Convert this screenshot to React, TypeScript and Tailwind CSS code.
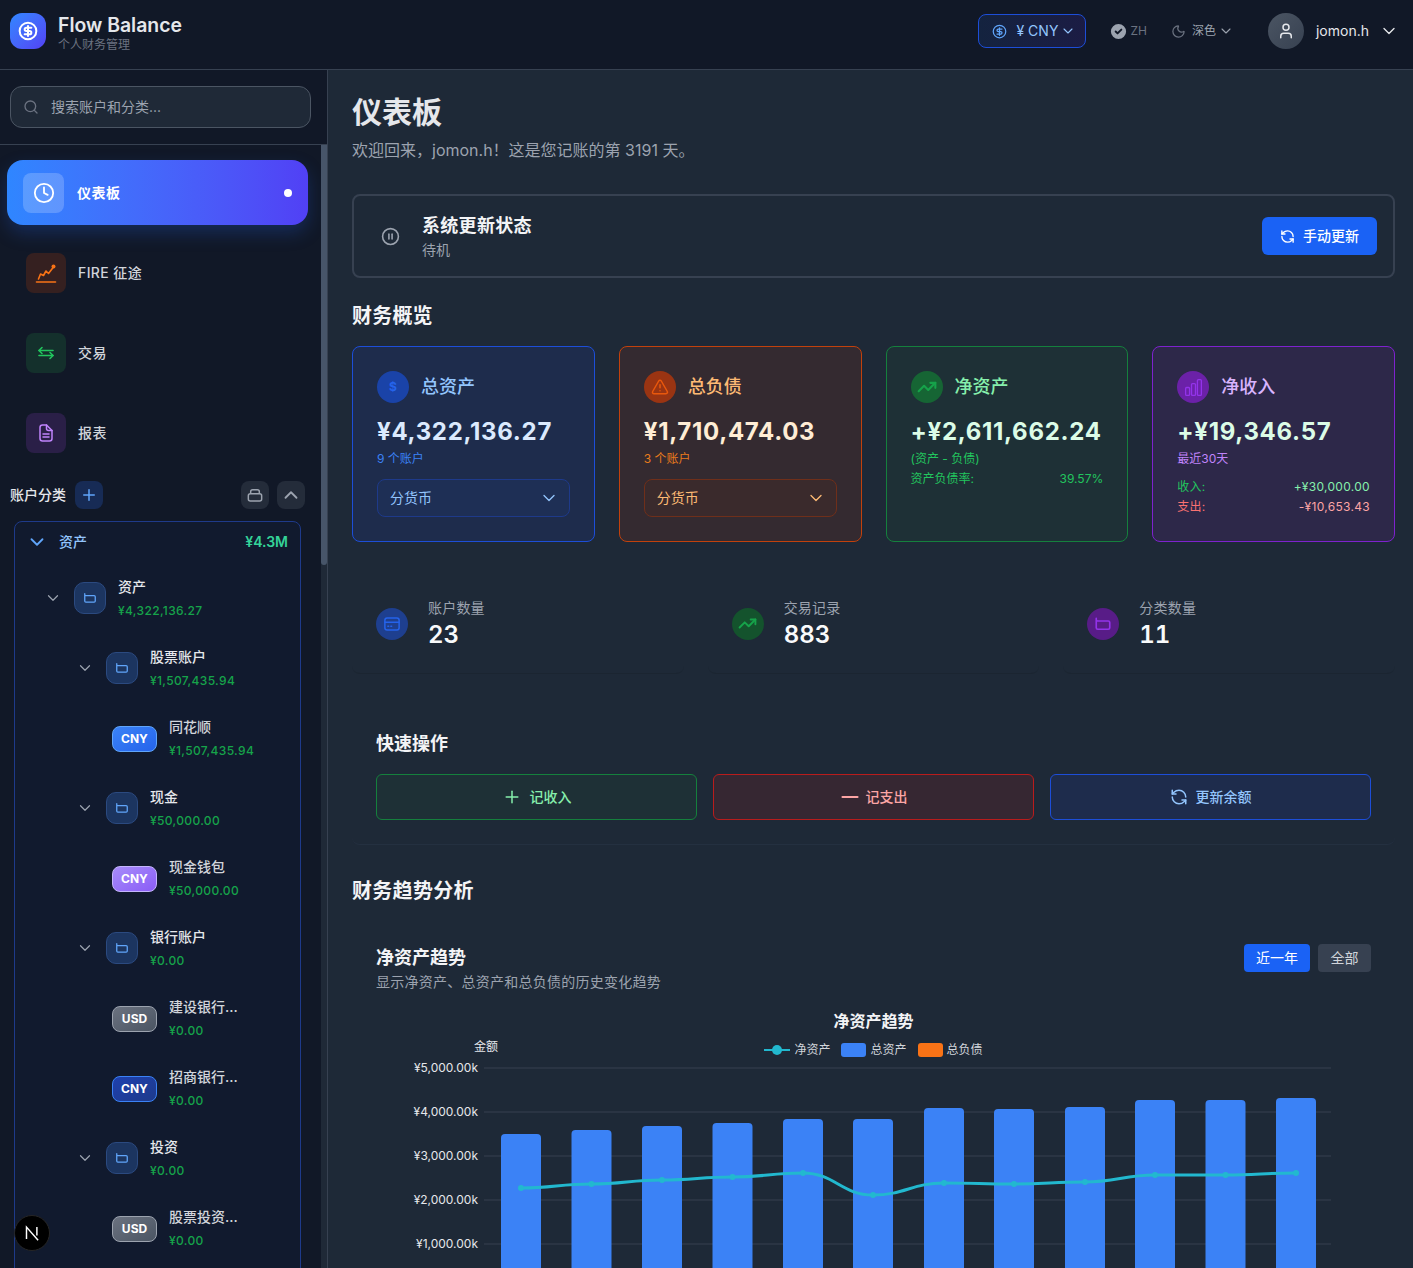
import React from "react";
import {
  ChevronDown,
  ChevronUp,
  CircleDollarSign,
  CirclePause,
  Clock,
  Minus,
  Moon,
  Plus,
  RefreshCcw,
  Search,
  TrendingUp,
  TriangleAlert,
  User,
} from "lucide-react";
import { HiCheckCircle } from "react-icons/hi";
import { HiOutlineChartBar } from "react-icons/hi2";

const FolderIcon = ({ className }: { className: string }) => (
  <svg viewBox="0 0 24 24" fill="none" stroke="currentColor" strokeWidth="2.2" strokeLinejoin="round" strokeLinecap="round" className={className}>
    <path d="M3 4.5V17a2 2 0 0 0 2 2h14a2 2 0 0 0 2-2v-7a2 2 0 0 0-2-2H5a2 2 0 0 1-2-2" />
  </svg>
);

const FireIcon = () => (
  <svg viewBox="0 0 24 24" fill="none" stroke="#f97316" strokeWidth="1.6" strokeLinejoin="round" strokeLinecap="round" className="w-6 h-6">
    <path d="M2.5 21h19" />
    <path d="M4.5 18l2-5 3 1.5 2.5-4.5 2.5 2.5L19.5 6" />
    <circle cx="19.5" cy="5.5" r="2" fill="#f97316" stroke="none" />
  </svg>
);

const SwapIcon = () => (
  <svg viewBox="0 0 20 20" fill="none" stroke="#22c55e" strokeWidth="1.6" strokeLinejoin="round" strokeLinecap="round" className="w-5 h-5">
    <path d="M3 7.5h14" />
    <path d="M6 4.5l-3 3 3 3" />
    <path d="M17 12.5H3" />
    <path d="M14 9.5l3 3-3 3" />
  </svg>
);

const DocIcon = () => (
  <svg viewBox="0 0 20 20" fill="none" stroke="#c084fc" strokeWidth="1.5" strokeLinejoin="round" strokeLinecap="round" className="w-5 h-5">
    <path d="M4 4.5A2.5 2.5 0 0 1 6.5 2h4L16 7.5v8a2.5 2.5 0 0 1-2.5 2.5h-7A2.5 2.5 0 0 1 4 15.5z" />
    <path d="M10.5 2v3.5a2 2 0 0 0 2 2H16" />
    <path d="M7 11h6M7 14h6" />
  </svg>
);

const CardIcon = () => (
  <svg viewBox="0 0 24 24" fill="none" stroke="#2563eb" strokeWidth="2" strokeLinejoin="round" strokeLinecap="round" className="w-[18px] h-[18px]">
    <rect x="2.5" y="4" width="19" height="16" rx="3" />
    <path d="M2.5 9.5h19" />
    <path d="M6.5 15h1M10.5 15h1" />
  </svg>
);

const StackIcon = () => (
  <svg viewBox="0 0 24 24" fill="none" stroke="#9ca3af" strokeWidth="2.2" strokeLinejoin="round" className="w-4 h-4">
    <rect x="2" y="10" width="20" height="11" rx="3" />
    <path d="M5.5 10V7a3 3 0 0 1 3-3h7a3 3 0 0 1 3 3v3" />
  </svg>
);

const navItems = [
  { label: "FIRE 征途", box: "bg-[#352020]", icon: <FireIcon /> },
  { label: "交易", box: "bg-[#14302c]", icon: <SwapIcon /> },
  { label: "报表", box: "bg-[#2a1f47]", icon: <DocIcon /> },
];

const treeRows = [
  { kind: "folder", indent: "pl-[29px]", name: "资产", amount: "¥4,322,136.27" },
  { kind: "folder", indent: "pl-[61px]", name: "股票账户", amount: "¥1,507,435.94" },
  { kind: "account", badge: "CNY", tone: "border-[#60a5fa] from-[#3b82f6] to-[#2563eb]", name: "同花顺", amount: "¥1,507,435.94" },
  { kind: "folder", indent: "pl-[61px]", name: "现金", amount: "¥50,000.00" },
  { kind: "account", badge: "CNY", tone: "border-[#c4b5fd] from-[#a78bfa] to-[#8b5cf6]", name: "现金钱包", amount: "¥50,000.00" },
  { kind: "folder", indent: "pl-[61px]", name: "银行账户", amount: "¥0.00" },
  { kind: "account", badge: "USD", tone: "border-[#9ca3af] from-[#6b7280] to-[#4b5563]", name: "建设银行...", amount: "¥0.00" },
  { kind: "account", badge: "CNY", tone: "border-[#3b82f6] from-[#1e40af] to-[#1e3a8a]", name: "招商银行...", amount: "¥0.00" },
  { kind: "folder", indent: "pl-[61px]", name: "投资", amount: "¥0.00" },
  { kind: "account", badge: "USD", tone: "border-[#9ca3af] from-[#6b7280] to-[#4b5563]", name: "股票投资...", amount: "¥0.00" },
];

const Sidebar = () => (
  <aside className="relative w-[328px] shrink-0 border-r border-[#374151] bg-[#111827] overflow-hidden">
    <div className="pl-[10px] pr-4 pt-4 pb-4 border-b border-[#374151]">
      <div className="h-[42px] rounded-xl border border-[#4b5563] bg-[#1f2937] flex items-center px-3 gap-3">
        <Search className="w-4 h-4 text-[#6b7280]" />
        <span className="text-sm text-[#9ca3af]">搜索账户和分类...</span>
      </div>
    </div>
    <div className="pr-[6px]">
      <nav className="pt-[15px] pl-[7px] pr-[13px] flex flex-col gap-[15px]">
        <div className="h-[65px] rounded-2xl bg-gradient-to-r from-[#2f86ff] to-[#5140f5] shadow-[0_8px_18px_rgba(37,99,235,0.25)] flex items-center pl-4 pr-4">
          <div className="w-[41px] h-10 rounded-lg bg-white/20 flex items-center justify-center">
            <Clock className="w-[22px] h-[22px] text-white" />
          </div>
          <span className="ml-[13px] text-sm font-semibold tracking-[0.5px] text-white">仪表板</span>
          <span className="ml-auto w-2 h-2 rounded-full bg-white" />
        </div>
        {navItems.map((item) => (
          <div key={item.label} className="h-[65px] flex items-center pl-[19px]">
            <div className={`w-10 h-10 rounded-lg flex items-center justify-center ${item.box}`}>{item.icon}</div>
            <span className="ml-3 text-sm font-medium tracking-[0.4px] text-[#d1d5db]">{item.label}</span>
          </div>
        ))}
      </nav>
      <div className="mt-4 pl-[10px] pr-[16px] h-7 flex items-center">
        <span className="text-sm font-medium text-[#e5e7eb]">账户分类</span>
        <button className="ml-[9px] w-7 h-7 rounded-lg bg-[#172b55] flex items-center justify-center">
          <Plus className="w-[18px] h-[18px] text-[#60a5fa]" />
        </button>
        <button className="ml-auto w-7 h-7 rounded-lg bg-[#242c3a] flex items-center justify-center">
          <StackIcon />
        </button>
        <button className="ml-2 w-7 h-7 rounded-lg bg-[#242c3a] flex items-center justify-center">
          <ChevronUp className="w-[22px] h-[22px] text-[#9ca3af]" />
        </button>
      </div>
      <div className="mt-3 ml-[14px] mr-5 rounded-lg border border-[#1e3a8a] bg-[#111a2e] pb-10">
        <div className="h-[41px] flex items-center pl-[11px] pr-3 pb-[2px]">
          <ChevronDown className="w-[22px] h-[22px] text-[#60a5fa]" />
          <span className="ml-[11px] text-sm font-medium text-[#93c5fd]">资产</span>
          <span className="ml-auto text-sm font-semibold text-[#34d399]">¥4.3M</span>
        </div>
        {treeRows.map((row, i) =>
          row.kind === "folder" ? (
            <div key={i} className={`h-[70px] flex items-center ${row.indent}`}>
              <ChevronDown strokeWidth={1.6} className="w-[18px] h-[18px] text-[#9ca3af] mr-3" />
              <div className="w-8 h-8 rounded-[10px] border border-[#2b4a80] bg-[#1c3560] flex items-center justify-center">
                <FolderIcon className="w-[14px] h-[14px] text-[#60a5fa]" />
              </div>
              <div className="ml-3 pt-[2px]">
                <div className="text-sm font-medium leading-5 text-[#e5e7eb]">{row.name}</div>
                <div className="mt-1 text-xs leading-5 font-medium tracking-[0.35px] text-[#16a34a]">{row.amount}</div>
              </div>
            </div>
          ) : (
            <div key={i} className="h-[70px] flex items-center pl-[97px]">
              <div className={`mt-[2px] w-[45px] h-[26px] rounded-lg border bg-gradient-to-br flex items-center justify-center text-xs font-bold text-white ${row.tone}`}>
                {row.badge}
              </div>
              <div className="ml-3 pt-[2px]">
                <div className="text-sm font-medium leading-5 text-[#d1d5db]">{row.name}</div>
                <div className="mt-1 text-xs leading-5 font-medium tracking-[0.35px] text-[#16a34a]">{row.amount}</div>
              </div>
            </div>
          ),
        )}
      </div>
    </div>
    <div className="absolute right-0 top-[75px] bottom-0 w-[6px] bg-[#1f2937]">
      <div className="h-[420px] rounded-b-sm bg-[#475569]" />
    </div>
  </aside>
);

const Header = () => (
  <header className="h-[70px] shrink-0 border-b border-[#374151] bg-[#111827] flex items-center pl-[10px] pr-[14px] pb-[7px]">
    <div className="w-9 h-9 rounded-xl bg-gradient-to-br from-[#2f86ff] to-[#5140f5] flex items-center justify-center">
      <CircleDollarSign strokeWidth={2.4} className="w-5 h-5 text-white" />
    </div>
    <div className="ml-3 pt-[3px]">
      <div className="text-[19.4px] leading-6 font-semibold text-[#e5e7eb]">Flow Balance</div>
      <div className="text-xs leading-4 text-[#6b7280]">个人财务管理</div>
    </div>
    <button className="ml-auto w-[108px] h-[34px] rounded-lg border border-[#1d4ed8] bg-gradient-to-r from-[#14233f] to-[#1b1c44] flex items-center pl-[13px]">
      <CircleDollarSign className="w-[15px] h-[15px] text-[#60a5fa]" />
      <span className="ml-[9px] text-sm text-[#93c5fd]">¥ CNY</span>
      <ChevronDown strokeWidth={1.6} className="ml-[2px] w-4 h-4 text-[#93c5fd]" />
    </button>
    <div className="ml-[23px] flex items-center">
      <HiCheckCircle className="w-[19px] h-[19px] text-[#9ca3af]" />
      <span className="ml-[2px] text-xs text-[#6b7280]">ZH</span>
    </div>
    <div className="ml-[24px] flex items-center">
      <Moon className="w-[15px] h-[15px] text-[#6b7280]" />
      <span className="ml-[6px] text-xs text-[#9ca3af]">深色</span>
      <ChevronDown strokeWidth={1.6} className="ml-[2px] w-4 h-4 text-[#9ca3af]" />
    </div>
    <div className="ml-[34px] w-9 h-9 rounded-full bg-gradient-to-br from-[#4b5563] to-[#374151] flex items-center justify-center">
      <User className="w-[18px] h-[18px] text-[#e5e7eb]" />
    </div>
    <span className="ml-3 text-sm text-[#e5e7eb]">jomon.h</span>
    <ChevronDown strokeWidth={1.6} className="ml-[10px] w-5 h-5 text-[#e5e7eb]" />
  </header>
);

const SummaryCard = ({
  tone,
  circle,
  icon,
  title,
  titleColor,
  value,
  valueColor,
  sub,
  subColor,
  children,
}: {
  tone: string;
  circle: string;
  icon: React.ReactNode;
  title: string;
  titleColor: string;
  value: string;
  valueColor: string;
  sub: string;
  subColor: string;
  children?: React.ReactNode;
}) => (
  <div className={`h-[196px] rounded-lg border p-6 ${tone}`}>
    <div className="flex items-center h-8">
      <div className={`w-8 h-8 rounded-full flex items-center justify-center ${circle}`}>{icon}</div>
      <span className={`ml-3 text-lg font-medium ${titleColor}`}>{title}</span>
    </div>
    <div className={`mt-[13px] text-2xl leading-8 font-bold tracking-[0.7px] ${valueColor}`}>{value}</div>
    <div className={`mt-[3px] text-xs leading-4 ${subColor}`}>{sub}</div>
    {children}
  </div>
);

const CurrencySelect = ({ tone, text }: { tone: string; text: string }) => (
  <div className={`mt-3 h-[38px] rounded-lg border flex items-center justify-between pl-3 pr-[10px] ${tone}`}>
    <span className={`text-sm ${text}`}>分货币</span>
    <ChevronDown strokeWidth={1.6} className={`w-5 h-5 ${text}`} />
  </div>
);

const stats = [
  { label: "账户数量", value: "23", circle: "bg-[#1e3f8f]", icon: <CardIcon /> },
  { label: "交易记录", value: "883", circle: "bg-[#14532d]", icon: <TrendingUp strokeWidth={2.4} className="w-[19px] h-[19px] text-[#16a34a]" /> },
  { label: "分类数量", value: "11", circle: "bg-[#581c87]", icon: <FolderIcon className="w-[18px] h-[18px] text-[#9333ea]" /> },
];

const barTops = [1134, 1130, 1126, 1123, 1119, 1119, 1108, 1109, 1107, 1100, 1100, 1098];
const lineYs = [1188, 1184, 1180, 1177, 1173, 1195, 1183, 1184, 1182, 1175, 1175, 1173];
const centers = [521, 591.5, 662, 732.5, 803, 873, 944, 1014, 1085, 1155, 1225.5, 1296];
const ticks = [
  { y: 1068, label: "¥5,000.00k" },
  { y: 1112, label: "¥4,000.00k" },
  { y: 1156, label: "¥3,000.00k" },
  { y: 1200, label: "¥2,000.00k" },
  { y: 1244, label: "¥1,000.00k" },
];

// svg origin sits at page (376, 1036)
const ox = 376;
const oy = 1036;

const linePath = () => {
  const pts = centers.map((c, i) => [c - ox, lineYs[i] - oy]);
  let d = `M${pts[0][0]} ${pts[0][1]}`;
  for (let i = 1; i < pts.length; i++) {
    const [x0, y0] = pts[i - 1];
    const [x1, y1] = pts[i];
    const dx = (x1 - x0) * 0.45;
    d += ` C${x0 + dx} ${y0} ${x1 - dx} ${y1} ${x1} ${y1}`;
  }
  return d;
};

const TrendChart = () => (
  <div className="relative mt-[17px]">
    <div className="text-center text-base leading-6 font-bold text-[#f3f4f6]">净资产趋势</div>
    <div className="absolute left-0 right-0 top-[33px] flex justify-center items-center gap-[11px] text-xs leading-4 text-[#d1d5db]">
      <span className="flex items-center gap-[4px]">
        <svg width="26" height="14" viewBox="0 0 26 14">
          <path d="M0 7h26" stroke="#22b8cf" strokeWidth="2" />
          <circle cx="13" cy="7" r="5" fill="#22b8cf" />
        </svg>
        净资产
      </span>
      <span className="flex items-center gap-[4px]">
        <span className="w-[25px] h-[14px] rounded-[3px] bg-[#3b82f6]" />
        总资产
      </span>
      <span className="flex items-center gap-[4px]">
        <span className="w-[25px] h-[14px] rounded-[3px] bg-[#f97316]" />
        总负债
      </span>
    </div>
    <svg width="995" height="240" viewBox="0 0 995 240" className="mt-[3px] block">
      <text x={122} y={1051 - oy} textAnchor="end" fontSize="12" fill="#e5e7eb">金额</text>
      {ticks.map((t) => (
        <g key={t.y}>
          <line x1={108} x2={955} y1={t.y - oy} y2={t.y - oy} stroke="#374151" />
          <text x={102} y={t.y - oy + 4} textAnchor="end" fontSize="12" fill="#e5e7eb">{t.label}</text>
        </g>
      ))}
      {centers.map((c, i) => (
        <path
          key={c}
          d={`M${c - ox - 20} 240V${barTops[i] - oy + 4}a4 4 0 0 1 4-4h32a4 4 0 0 1 4 4V240z`}
          fill="#3b82f6"
        />
      ))}
      <path d={linePath()} fill="none" stroke="#22b8cf" strokeWidth="3" />
      {centers.map((c, i) => (
        <circle key={c} cx={c - ox} cy={lineYs[i] - oy} r="3" fill="#22b8cf" />
      ))}
    </svg>
  </div>
);

const Main = () => (
  <main className="flex-1 min-w-0 bg-[#1e2937] overflow-hidden pt-6 pl-6 pr-[18px]">
    <h1 className="text-3xl font-bold text-[#e5e7eb]">仪表板</h1>
    <p className="mt-2 text-base text-[#9ca3af]">欢迎回来，jomon.h！这是您记账的第 3191 天。</p>

    <section className="mt-8 h-[84px] rounded-lg border-2 border-[#374151] flex items-center pl-[27px] pr-[16px]">
      <CirclePause className="w-[19px] h-[19px] text-[#9ca3af]" />
      <div className="ml-[22px]">
        <div className="text-lg leading-7 font-semibold tracking-[0.3px] text-[#f3f4f6]">系统更新状态</div>
        <div className="text-sm leading-5 text-[#9ca3af]">待机</div>
      </div>
      <button className="ml-auto w-[115px] h-[38px] rounded-md bg-[#1a62f5] flex items-center justify-center gap-2 text-sm font-medium text-white">
        <RefreshCcw strokeWidth={2.2} className="w-[15px] h-[15px]" />
        手动更新
      </button>
    </section>

    <h2 className="mt-6 text-xl font-semibold tracking-[0.2px] text-[#f3f4f6]">财务概览</h2>
    <div className="mt-4 grid grid-cols-4 gap-6">
      <SummaryCard
        tone="bg-[#1e2c4c] border-[#1d4ed8]"
        circle="bg-[#1a43a8]"
        icon={<span className="text-xs font-bold text-[#2563eb]">$</span>}
        title="总资产"
        titleColor="text-[#93c5fd]"
        value="¥4,322,136.27"
        valueColor="text-[#dbeafe]"
        sub="9 个账户"
        subColor="text-[#3b82f6]"
      >
        <CurrencySelect tone="border-[#1e3a8a] bg-[#1e2f55]" text="text-[#93c5fd]" />
      </SummaryCard>
      <SummaryCard
        tone="bg-[#342a30] border-[#c2410c]"
        circle="bg-[#9a3412]"
        icon={<TriangleAlert className="w-[18px] h-[18px] text-[#ea580c]" />}
        title="总负债"
        titleColor="text-[#fdba74]"
        value="¥1,710,474.03"
        valueColor="text-[#ffedd5]"
        sub="3 个账户"
        subColor="text-[#ea7c1c]"
      >
        <CurrencySelect tone="border-[#6f2f1a] bg-[#3a2a2c]" text="text-[#fdba74]" />
      </SummaryCard>
      <SummaryCard
        tone="bg-[#1e3036] border-[#15803d]"
        circle="bg-[#166534]"
        icon={<TrendingUp strokeWidth={2.5} className="w-5 h-5 text-[#16a34a]" />}
        title="净资产"
        titleColor="text-[#86efac]"
        value="+¥2,611,662.24"
        valueColor="text-[#dcfce7]"
        sub="(资产 - 负债)"
        subColor="text-[#22c55e]"
      >
        <div className="mt-1 flex justify-between text-xs leading-4 text-[#22c55e]">
          <span>资产负债率:</span>
          <span>39.57%</span>
        </div>
      </SummaryCard>
      <SummaryCard
        tone="bg-[#2d2849] border-[#7e22ce]"
        circle="bg-[#6b21a8]"
        icon={<HiOutlineChartBar className="w-[21px] h-[21px] text-[#9333ea]" />}
        title="净收入"
        titleColor="text-[#d8b4fe]"
        value="+¥19,346.57"
        valueColor="text-[#dcfce7]"
        sub="最近30天"
        subColor="text-[#c084fc]"
      >
        <div className="mt-[10px] flex justify-between text-xs leading-5 tracking-[0.3px] text-[#22c55e]">
          <span>收入:</span>
          <span className="text-[#86efac]">+¥30,000.00</span>
        </div>
        <div className="flex justify-between text-xs leading-5 tracking-[0.3px] text-[#f87171]">
          <span>支出:</span>
          <span className="text-[#fca5a5]">-¥10,653.43</span>
        </div>
      </SummaryCard>
    </div>

    <div className="mt-8 grid grid-cols-3 gap-6">
      {stats.map((s) => (
        <div key={s.label} className="h-[100px] rounded-lg border-b border-[#1b2531] p-6 flex items-center">
          <div className={`w-8 h-8 rounded-full flex items-center justify-center ${s.circle}`}>{s.icon}</div>
          <div className="ml-5 pt-[2px]">
            <div className="text-sm leading-5 tracking-[0.2px] text-[#9ca3af]">{s.label}</div>
            <div className="mt-[1px] text-2xl leading-8 font-semibold tabular-nums text-[#f9fafb]">{s.value}</div>
          </div>
        </div>
      ))}
    </div>

    <section className="mt-8 p-6 rounded-lg border-b border-[#243040]">
      <h3 className="text-lg font-semibold text-[#f3f4f6]">快速操作</h3>
      <div className="mt-4 grid grid-cols-3 gap-4">
        <button className="h-[46px] rounded-md border border-[#15803d] bg-[#1e3036] flex items-center justify-center gap-2 text-sm font-medium text-[#86efac]">
          <Plus strokeWidth={1.8} className="w-5 h-5" />
          记收入
        </button>
        <button className="h-[46px] rounded-md border border-[#b91c1c] bg-[#362732] flex items-center justify-center gap-[3px] pr-[3px] text-sm font-medium text-[#fca5a5]">
          <Minus strokeWidth={1.8} className="w-[26px] h-[26px]" />
          记支出
        </button>
        <button className="h-[46px] rounded-md border border-[#1d4ed8] bg-[#1e2c4c] flex items-center justify-center gap-2 text-sm font-medium text-[#93c5fd]">
          <RefreshCcw className="w-[18px] h-[18px]" />
          更新余额
        </button>
      </div>
    </section>

    <h2 className="mt-8 text-xl font-semibold tracking-[0.3px] text-[#f3f4f6]">财务趋势分析</h2>
    <section className="mt-[15px] p-6">
      <div className="flex items-start justify-between">
        <div>
          <h3 className="text-lg leading-7 font-semibold text-[#f3f4f6]">净资产趋势</h3>
          <p className="text-sm leading-5 tracking-[0.25px] text-[#9ca3af]">显示净资产、总资产和总负债的历史变化趋势</p>
        </div>
        <div className="flex gap-2">
          <button className="w-[66px] h-7 rounded bg-[#1a62f5] text-sm text-white">近一年</button>
          <button className="w-[53px] h-7 rounded bg-[#374151] text-sm text-[#d1d5db]">全部</button>
        </div>
      </div>
      <TrendChart />
    </section>
  </main>
);

const App: React.FC = () => {
  return (
    <div className="relative h-screen w-screen overflow-hidden flex flex-col font-['Inter','Noto_Sans_CJK_SC',sans-serif]">
      <Header />
      <div className="flex flex-1 min-h-0">
        <Sidebar />
        <Main />
      </div>
      <div className="absolute left-[14px] bottom-[17px] w-9 h-9 rounded-full bg-black border border-[#262626] flex items-center justify-center">
        <svg viewBox="0 0 18 18" className="w-[22px] h-[22px]" fill="none" stroke="#fff" strokeWidth="1.2">
          <path d="M4.5 14V4.2L14 15" />
          <path d="M13 4v7" />
        </svg>
      </div>
    </div>
  );
};

export default App;
